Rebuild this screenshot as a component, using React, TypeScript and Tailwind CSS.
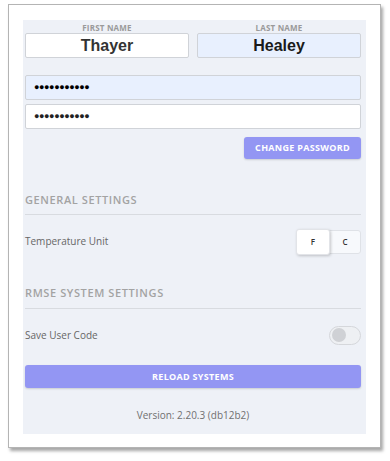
import React, { useState } from 'react';

export default function App() {
  const [unit, setUnit] = useState<'F' | 'C'>('F');
  const [saveCode, setSaveCode] = useState(false);

  return (
    <div className="w-[390px] h-[461px] bg-white pt-[4px] pl-[8px]" style={{ fontFamily: '"Open Sans", "Noto Sans", sans-serif' }}>
      {/* Card */}
      <div className="w-[373px] h-[444px] bg-white border border-[#b4b4b4] shadow-[2px_3px_3px_rgba(0,0,0,0.35)] pt-[15px] pl-[14px]">
        <div className="w-[343px] h-[414px] bg-[#eef1f7] pl-[2px] pr-[5px] pt-[2px]">
          {/* Names */}
          <div className="flex gap-[8px]">
            {[
              { label: 'FIRST NAME', value: 'Thayer', auto: false },
              { label: 'LAST NAME', value: 'Healey', auto: true },
            ].map(f => (
              <div key={f.label} className="flex-1 flex flex-col items-center">
                <div className="h-[11px] text-[8px] leading-[11px] font-bold text-[#9a9a9a] tracking-[0.2px]">{f.label}</div>
                <div
                  className={`w-full h-[25px] border border-[#d0d3d8] rounded-[2px] flex items-center justify-center text-[16px] font-bold ${f.auto ? 'bg-[#e8f0fe] text-[#1a1a1a]' : 'bg-white text-[#333]'}`}
                  style={{ fontFamily: '"Liberation Sans", Arial, sans-serif' }}
                >
                  {f.value}
                </div>
              </div>
            ))}
          </div>

          {/* Passwords */}
          <div className="mt-[17px] flex flex-col gap-[4px]">
            <div className="h-[25px] bg-[#e8f0fe] border border-[#d0d3d8] rounded-[2px] flex items-center pl-[8px] text-[9px] text-black tracking-[-0.4px]" style={{ fontFamily: '"Liberation Sans", Arial, sans-serif' }}>
              ●●●●●●●●●●●
            </div>
            <div className="h-[25px] bg-white border border-[#d0d3d8] rounded-[2px] flex items-center pl-[8px] text-[9px] text-[#222] tracking-[-0.4px]" style={{ fontFamily: '"Liberation Sans", Arial, sans-serif' }}>
              ●●●●●●●●●●●
            </div>
          </div>

          <div className="flex justify-end mt-[8px]">
            <button className="w-[117px] h-[22px] bg-[#9396f3] rounded-[3px] text-white text-[9px] font-bold tracking-[0.3px] shadow-[0_1px_2px_rgba(0,0,0,0.15)]">
              CHANGE PASSWORD
            </button>
          </div>

          {/* General settings */}
          <div className="mt-[33px] text-[11px] font-semibold text-[#a3a3a3] tracking-[0.6px] leading-[16px]">GENERAL SETTINGS</div>
          <div className="mt-[6px] h-px bg-[#d8dbe0]" />
          <div className="mt-[13px] flex items-center justify-between h-[27px]">
            <span className="text-[10px] text-[#666]">Temperature Unit</span>
            <div className="flex items-center">
              <button
                onClick={() => setUnit('F')}
                className={`w-[34px] h-[26px] text-[8px] font-semibold text-[#333] rounded-[3px] border border-[#e2e4e8] ${unit === 'F' ? 'bg-white shadow-[1px_1px_3px_rgba(0,0,0,0.2)] z-10' : 'bg-[#f7f9fc]'}`}
              >
                F
              </button>
              <button
                onClick={() => setUnit('C')}
                className={`w-[32px] h-[24px] text-[8px] font-semibold text-[#333] rounded-r-[3px] border border-[#dfe2e7] -ml-[1px] ${unit === 'C' ? 'bg-white shadow-[1px_1px_3px_rgba(0,0,0,0.2)]' : 'bg-[#f7f9fc]'}`}
              >
                C
              </button>
            </div>
          </div>

          {/* RMSE settings */}
          <div className="mt-[30px] text-[11px] font-semibold text-[#a3a3a3] tracking-[0.6px] leading-[16px]">RMSE SYSTEM SETTINGS</div>
          <div className="mt-[7px] h-px bg-[#d8dbe0]" />
          <div className="mt-[16px] flex items-center justify-between h-[20px]">
            <span className="text-[10px] text-[#666]">Save User Code</span>
            <button
              onClick={() => setSaveCode(!saveCode)}
              className={`w-[32px] h-[19px] rounded-full border border-[#d5d7db] flex items-center px-[2px] ${saveCode ? 'bg-[#9396f3] justify-end' : 'bg-[#eef0f3] justify-start'}`}
            >
              <span className="w-[14px] h-[14px] rounded-full bg-[#cfd1d5]" />
            </button>
          </div>

          <button className="mt-[20px] w-full h-[23px] bg-[#9396f3] rounded-[3px] text-white text-[9px] font-bold tracking-[0.3px] shadow-[0_1px_2px_rgba(0,0,0,0.15)]">
            RELOAD SYSTEMS
          </button>

          <div className="mt-[20px] text-center text-[10px] text-[#707070]">Version: 2.20.3 (db12b2)</div>
        </div>
      </div>
    </div>
  );
}
